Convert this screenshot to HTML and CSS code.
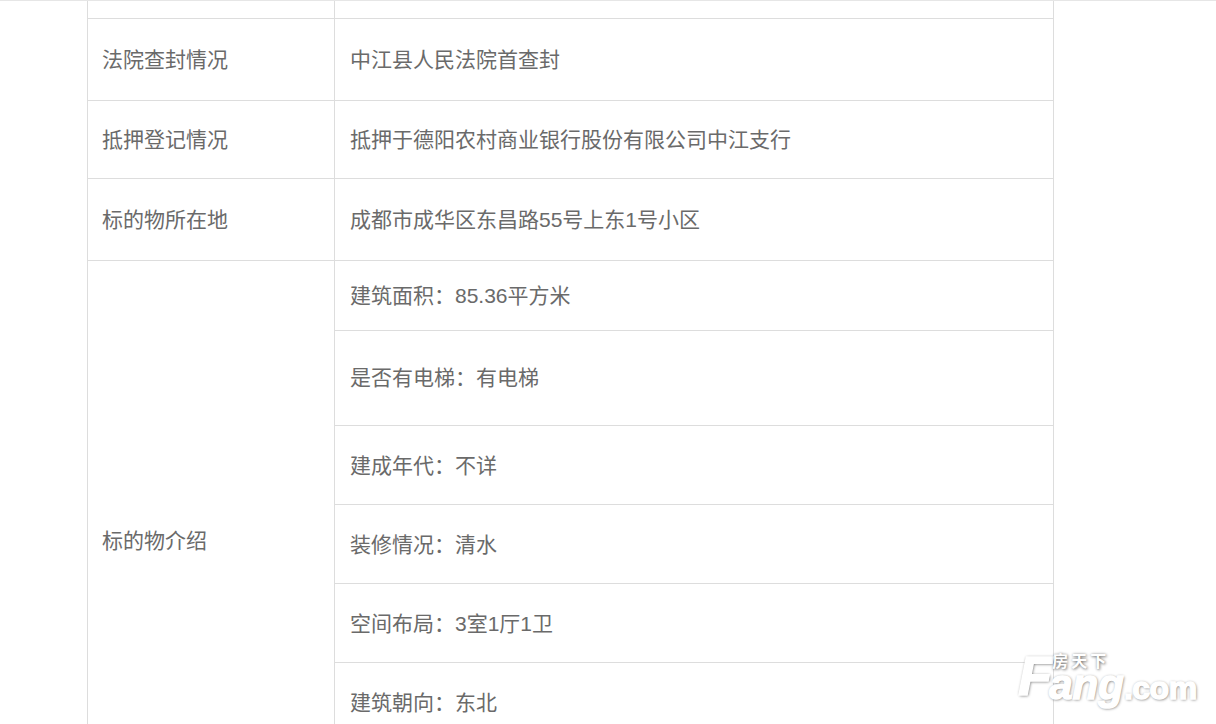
FILE: index.html
```html
<!DOCTYPE html>
<html lang="zh-CN">
<head>
<meta charset="utf-8">
<title>标的物详情</title>
<link rel="stylesheet" href="styles.css">
</head>
<body>
<main class="page">
<table class="info">
<colgroup><col class="col-label"><col class="col-value"></colgroup>
<tbody>
<tr class="h-17"><td></td><td></td></tr>
<tr class="h-82"><td>法院查封情况</td><td>中江县人民法院首查封</td></tr>
<tr class="h-78"><td>抵押登记情况</td><td>抵押于德阳农村商业银行股份有限公司中江支行</td></tr>
<tr class="h-82"><td>标的物所在地</td><td>成都市成华区东昌路55号上东1号小区</td></tr>
<tr class="h-70"><td rowspan="7">标的物介绍</td><td>建筑面积：85.36平方米</td></tr>
<tr class="h-95"><td>是否有电梯：有电梯</td></tr>
<tr class="h-79"><td>建成年代：不详</td></tr>
<tr class="h-79"><td>装修情况：清水</td></tr>
<tr class="h-79"><td>空间布局：3室1厅1卫</td></tr>
<tr class="h-79"><td>建筑朝向：东北</td></tr>
<tr class="h-79"><td></td></tr>
</tbody>
</table>
</main>
<div class="watermark">
  <span class="wm-f">F</span>
  <div class="wm-right">
    <span class="wm-cn">房天下</span>
    <span class="wm-en">ang<span class="wm-com">.com</span></span>
  </div>
</div>
</body>
</html>
```
FILE: styles.css
```css
html, body {
  margin: 0;
  height: 724px;
  overflow: hidden;
  background: #fff;
}
.page {
  border-top: 1px solid #e6e6e6;
  height: 723px;
  padding-left: 87px;
}
.info {
  width: 967px;
  table-layout: fixed;
  border-collapse: collapse;
  font-family: "Liberation Sans", "Noto Sans CJK SC", sans-serif;
  font-size: 21px;
  line-height: 30px;
  color: #6a6a6a;
}
.col-label { width: 247px; }
.info td {
  border: 1px solid #ddd;
  padding: 1px 14px 0 15px;
  vertical-align: middle;
}
.info td:first-child[rowspan],
.info tr:nth-child(-n+4) td:first-child {
  padding-left: 14px;
}
.info tr:first-child td { border-top: 0; padding: 0; }
.h-17 { height: 17px; }
.h-70 { height: 70px; }
.h-78 { height: 78px; }
.h-79 { height: 79px; }
.h-79 td:last-child { padding-top: 3px; }
.h-82 { height: 82px; }
.h-95 { height: 95px; }
.watermark {
  position: absolute;
  left: 1018px;
  top: 650px;
  display: flex;
  color: #fff;
  text-shadow: 1px 1px 3px rgba(0, 0, 0, .45), 0 0 3px rgba(0, 0, 0, .3);
  font-family: "Liberation Sans", sans-serif;
  font-weight: 700;
}
.wm-f {
  font-size: 56px;
  line-height: 52px;
  font-style: italic;
  -webkit-text-stroke: 1.5px #fff;
  margin-right: -3px;
}
.wm-right {
  display: flex;
  flex-direction: column;
}
.wm-cn {
  font-family: "Noto Sans CJK SC", sans-serif;
  font-size: 16px;
  line-height: 20px;
  letter-spacing: 3px;
  margin-left: 3px;
}
.wm-en {
  font-size: 42px;
  line-height: 30px;
  font-style: italic;
  -webkit-text-stroke: 1.5px #fff;
  white-space: nowrap;
}
.wm-com {
  font-size: 32px;
  font-style: normal;
  letter-spacing: -0.5px;
}
```
